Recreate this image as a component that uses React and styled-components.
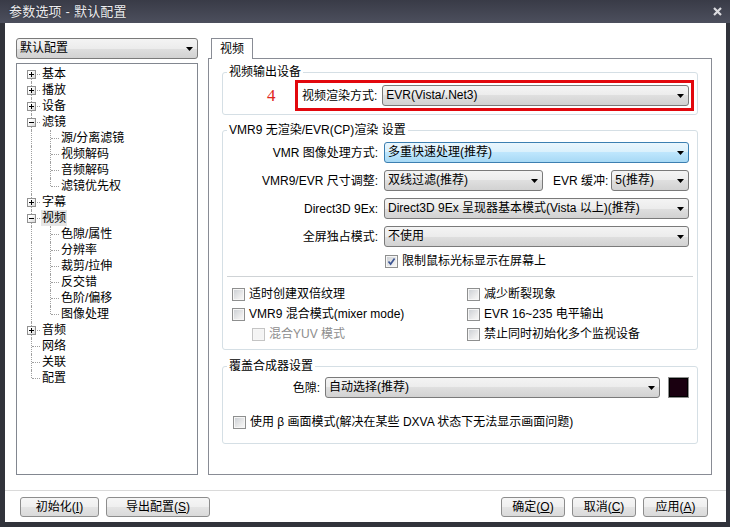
import React from 'react';
import styled, { createGlobalStyle } from 'styled-components';

const uiFont = `"Liberation Sans", "Noto Sans CJK SC", sans-serif`;

const GlobalStyle = createGlobalStyle`
  html, body {
    margin: 0;
    padding: 0;
    background: #2e3038;
  }

  body {
    font: 12px/14px ${uiFont};
    color: #000;
  }
`;

// Window chrome
const Window = styled.div`
  width: 730px;
  height: 527px;
  display: flex;
  flex-direction: column;
  background: #31333b;
`;

const TitleBar = styled.div`
  height: 23px;
  flex: none;
  display: flex;
  align-items: center;
  padding: 0 8px 0 9px;
  background: linear-gradient(#393b47, #4c4f5d);
  color: #ececef;
  font-size: 13px;
  text-shadow: 0 0 2px rgba(0, 0, 0, 0.5);
`;

const Title = styled.span`
  flex: 1;
  letter-spacing: 0.2px;
`;

const Client = styled.div`
  flex: 1;
  min-height: 0;
  margin: 0 4px 5px 5px;
  background: #fff;
  display: flex;
  flex-direction: column;
`;

const Main = styled.div`
  flex: 1;
  min-height: 0;
  display: flex;
  gap: 10px;
  padding: 15px 14px 15px 11px;
`;

const LeftPane = styled.div`
  width: 182px;
  flex: none;
  display: grid;
  grid-template-rows: 21px 1fr;
  gap: 4px;
`;

// Combo boxes
const ComboBox = styled.div`
  height: 21px;
  box-sizing: border-box;
  flex: ${({ $width }) => ($width ? 'none' : '1')};
  width: ${({ $width }) => ($width ? `${$width}px` : 'auto')};
  min-width: 0;
  display: flex;
  align-items: center;
  padding-left: 3px;
  border: 1px solid ${({ $focused }) => ($focused ? '#3c7fb1' : '#7a7a7a')};
  border-radius: 3px;
  background: ${({ $focused }) =>
    $focused
      ? 'linear-gradient(#eaf6fd 0%, #d9f0fc 50%, #bee6fd 50%, #a7d9f5 100%)'
      : 'linear-gradient(#f4f4f4 0%, #ececec 50%, #dfdfdf 50%, #d2d2d2 100%)'};
`;

const ComboText = styled.span`
  flex: 1;
  min-width: 0;
  white-space: nowrap;
  overflow: hidden;
  line-height: 19px;
`;

const ComboArrow = styled.span`
  width: 16px;
  flex: none;
  display: flex;
  align-items: center;
  justify-content: center;
`;

const Combo = ({ value, width, focused }) => (
  <ComboBox $width={width} $focused={focused}>
    <ComboText>{value}</ComboText>
    <ComboArrow>
      <svg width="7" height="4" viewBox="0 0 7 4">
        <polygon points="0,0 7,0 3.5,4" fill="#000" />
      </svg>
    </ComboArrow>
  </ComboBox>
);

// Tree view
const Tree = styled.div`
  border: 1px solid #828790;
  padding: 2px 0 0 5px;
`;

const TreeRow = styled.div`
  height: 16px;
  display: flex;
  align-items: center;
  line-height: 16px;
  white-space: nowrap;
`;

const Guide = styled.span`
  position: relative;
  width: 19px;
  height: 16px;
  flex: none;

  &::before {
    content: '';
    position: absolute;
    left: 9px;
    top: ${({ $type }) => ($type === 'first' ? '8px' : '0')};
    height: ${({ $type }) => ($type === 'first' || $type === 'last' ? '8px' : '16px')};
    border-left: 1px dotted #a0a0a0;
  }

  &::after {
    content: '';
    position: absolute;
    left: 10px;
    top: 8px;
    width: 8px;
    border-top: 1px dotted #a0a0a0;
    display: ${({ $type }) => ($type === 'pipe' ? 'none' : 'block')};
  }
`;

const Expander = styled.span`
  position: absolute;
  z-index: 1;
  left: 5px;
  top: 4px;
  width: 9px;
  height: 9px;
  box-sizing: border-box;
  border: 1px solid #919191;
  background: linear-gradient(135deg, #ffffff 30%, #d6d6d6);

  &::before {
    content: '';
    position: absolute;
    left: 1px;
    top: 3px;
    width: 5px;
    height: 1px;
    background: #000;
  }

  &::after {
    content: '';
    position: absolute;
    left: 3px;
    top: 1px;
    width: 1px;
    height: 5px;
    background: #000;
    display: ${({ $open }) => ($open ? 'none' : 'block')};
  }
`;

const TreeLabel = styled.span`
  padding: 0 1px;
  background: ${({ $selected }) => ($selected ? '#e6e6e6' : 'transparent')};
`;

const treeItems = [
  { label: '基本', toggle: 'plus' },
  { label: '播放', toggle: 'plus' },
  { label: '设备', toggle: 'plus' },
  { label: '滤镜', toggle: 'minus', children: ['源/分离滤镜', '视频解码', '音频解码', '滤镜优先权'] },
  { label: '字幕', toggle: 'plus' },
  {
    label: '视频',
    toggle: 'minus',
    selected: true,
    children: ['色隙/属性', '分辨率', '裁剪/拉伸', '反交错', '色阶/偏移', '图像处理'],
  },
  { label: '音频', toggle: 'plus' },
  { label: '网络' },
  { label: '关联' },
  { label: '配置' },
];

const SettingsTree = () => {
  const last = treeItems.length - 1;
  const rows = [];

  treeItems.forEach((item, i) => {
    const type = i === 0 ? 'first' : i === last ? 'last' : 'tee';
    rows.push(
      <TreeRow key={item.label}>
        <Guide $type={type}>{item.toggle && <Expander $open={item.toggle === 'minus'} />}</Guide>
        <TreeLabel $selected={item.selected}>{item.label}</TreeLabel>
      </TreeRow>
    );
    (item.children || []).forEach((child, j, list) => {
      rows.push(
        <TreeRow key={child}>
          <Guide $type="pipe" />
          <Guide $type={j === list.length - 1 ? 'last' : 'tee'} />
          <TreeLabel>{child}</TreeLabel>
        </TreeRow>
      );
    });
  });

  return <Tree>{rows}</Tree>;
};

// Tabs
const RightPane = styled.div`
  flex: 1;
  min-width: 0;
  display: flex;
  flex-direction: column;
`;

const TabStrip = styled.div`
  height: 20px;
  flex: none;
  display: flex;
  padding-left: 3px;
`;

const Tab = styled.div`
  position: relative;
  z-index: 1;
  width: 42px;
  height: 21px;
  box-sizing: border-box;
  border: 1px solid #898c95;
  border-bottom: none;
  background: #fff;
  text-align: center;
  line-height: 20px;
`;

const TabPage = styled.div`
  flex: 1;
  border: 1px solid #898c95;
  padding: 6px 13px 0;
  display: flex;
  flex-direction: column;
`;

// Group boxes: the fieldset keeps no side padding so every legend sits at
// the same offset; the body inside carries the horizontal inset.
const Group = styled.fieldset`
  margin: ${({ $top }) => $top || 0}px 0 0;
  padding: ${({ $pt }) => $pt}px 0 ${({ $pb }) => $pb}px;
  min-width: 0;
  border: 1px solid #d5dfe5;
  border-radius: 3px;
`;

const Legend = styled.legend`
  padding: 0 2px;
  margin-left: 4px;
  line-height: 14px;
`;

const GroupBody = styled.div`
  padding: 0 ${({ $right }) => $right}px 0 ${({ $left }) => $left}px;
`;

const OutputRow = styled.div`
  display: flex;
  align-items: center;
`;

const Marker = styled.span`
  width: 28px;
  flex: none;
  color: #e0241c;
  font: 17px/20px "Liberation Serif", serif;
`;

const HighlightFrame = styled.div`
  flex: 1;
  display: flex;
  align-items: center;
  gap: 5px;
  padding: 2px 2px 2px 4px;
  border: 3px solid #e2070d;
`;

const FormRow = styled.div`
  height: 21px;
  display: flex;
  align-items: center;
  margin-top: ${({ $gap }) => $gap || 0}px;
`;

const FieldLabel = styled.span`
  width: ${({ $width }) => $width}px;
  flex: none;
  margin-right: ${({ $right }) => ($right === undefined ? 6 : $right)}px;
  text-align: right;
  white-space: nowrap;
`;

const InlineLabel = styled.span`
  flex: none;
  margin: 0 3px 0 10px;
  white-space: nowrap;
`;

const Swatch = styled.span`
  width: 21px;
  height: 21px;
  flex: none;
  box-sizing: border-box;
  margin-left: 8px;
  border: 1px solid #8e8e8e;
  box-shadow: inset 0 0 0 1px #000;
  background: #1a0010;
`;

const Separator = styled.div`
  height: 1px;
  margin: 7px -4px 0;
  background: #cfd3d6;
`;

const CheckGrid = styled.div`
  display: grid;
  grid-template-columns: 235px 1fr;
  grid-auto-rows: 20px;
  margin-top: 7px;
`;

// Check boxes
const CheckItem = styled.label`
  display: flex;
  align-items: center;
  height: ${({ $height }) => $height || 20}px;
  margin-top: ${({ $gap }) => $gap || 0}px;
  padding-left: ${({ $indent }) => $indent || 1}px;
  color: ${({ $disabled }) => ($disabled ? '#8d8d8d' : '#000')};
  white-space: nowrap;
`;

const CheckBox = styled.span`
  width: 13px;
  height: 13px;
  flex: none;
  box-sizing: border-box;
  margin-right: 4px;
  display: inline-flex;
  align-items: center;
  justify-content: center;
  border: 1px solid ${({ $disabled }) => ($disabled ? '#c4c4c4' : '#8e8f8f')};
  box-shadow: inset 0 0 0 1px #f6f6f6;
  background: ${({ $disabled }) =>
    $disabled ? '#f4f4f4' : 'linear-gradient(135deg, #c9cdd2 0%, #eeeeee 70%, #f8f8f8 100%)'};
`;

const Check = ({ label, checked, disabled, indent, gap, height }) => (
  <CheckItem $disabled={disabled} $indent={indent} $gap={gap} $height={height}>
    <CheckBox $disabled={disabled}>
      {checked && (
        <svg width="9" height="9" viewBox="0 0 9 9">
          <path d="M1.5 4.5 L3.6 7 L7.6 1.5" fill="none" stroke="#3d5694" strokeWidth="1.7" />
        </svg>
      )}
    </CheckBox>
    {label}
  </CheckItem>
);

// Footer buttons
const Footer = styled.div`
  flex: none;
  display: flex;
  gap: 7px;
  padding: 6px 18px 5px 15px;
  border-top: 1px solid #dadada;
`;

const Spacer = styled.span`
  flex: 1;
`;

const Button = styled.button`
  width: ${({ $width }) => $width}px;
  height: 20px;
  padding: 0;
  box-sizing: border-box;
  border: 1px solid #8d8d8d;
  border-radius: 3px;
  background: linear-gradient(#f6f6f6 0%, #efefef 50%, #e4e4e4 50%, #dadada 100%);
  font: 12px/18px ${uiFont};
  color: #000;

  u {
    text-decoration: underline;
    text-underline-offset: 1px;
  }
`;

export default function App() {
  return (
    <>
      <GlobalStyle />
      <Window>
        <TitleBar>
          <Title>参数选项 - 默认配置</Title>
          <svg width="9" height="9" viewBox="0 0 9 9">
            <path d="M1 1 L8 8 M8 1 L1 8" stroke="#dcdce0" strokeWidth="2.2" />
          </svg>
        </TitleBar>
        <Client>
          <Main>
            <LeftPane>
              <Combo value="默认配置" />
              <SettingsTree />
            </LeftPane>
            <RightPane>
              <TabStrip>
                <Tab>视频</Tab>
              </TabStrip>
              <TabPage>
                <Group $pt={1} $pb={3}>
                  <Legend>视频输出设备</Legend>
                  <GroupBody $left={44} $right={3}>
                    <OutputRow>
                      <Marker>4</Marker>
                      <HighlightFrame>
                        <span>视频渲染方式:</span>
                        <Combo value="EVR(Vista/.Net3)" />
                      </HighlightFrame>
                    </OutputRow>
                  </GroupBody>
                </Group>

                <Group $top={8} $pt={5} $pb={5}>
                  <Legend>VMR9 无渲染/EVR(CP)渲染 设置</Legend>
                  <GroupBody $left={8} $right={8}>
                    <FormRow>
                      <FieldLabel $width={147}>VMR 图像处理方式:</FieldLabel>
                      <Combo value="多重快速处理(推荐)" focused />
                    </FormRow>
                    <FormRow $gap={7}>
                      <FieldLabel $width={147}>VMR9/EVR 尺寸调整:</FieldLabel>
                      <Combo value="双线过滤(推荐)" width={159} />
                      <InlineLabel>EVR 缓冲:</InlineLabel>
                      <Combo value="5(推荐)" />
                    </FormRow>
                    <FormRow $gap={7}>
                      <FieldLabel $width={147}>Direct3D 9Ex:</FieldLabel>
                      <Combo value="Direct3D 9Ex 呈现器基本模式(Vista 以上)(推荐)" />
                    </FormRow>
                    <FormRow $gap={7}>
                      <FieldLabel $width={147}>全屏独占模式:</FieldLabel>
                      <Combo value="不使用" />
                    </FormRow>
                    <Check label="限制鼠标光标显示在屏幕上" checked indent={154} gap={6} height={16} />
                    <Separator />
                    <CheckGrid>
                      <Check label="适时创建双倍纹理" />
                      <Check label="减少断裂现象" />
                      <Check label="VMR9 混合模式(mixer mode)" />
                      <Check label="EVR 16~235 电平输出" />
                      <Check label="混合YUV 模式" disabled indent={21} />
                      <Check label="禁止同时初始化多个监视设备" />
                    </CheckGrid>
                  </GroupBody>
                </Group>

                <Group $top={9} $pt={4} $pb={13}>
                  <Legend>覆盖合成器设置</Legend>
                  <GroupBody $left={8} $right={8}>
                    <FormRow>
                      <FieldLabel $width={89} $right={5}>色隙:</FieldLabel>
                      <Combo value="自动选择(推荐)" />
                      <Swatch />
                    </FormRow>
                    <Check
                      label="使用 β 画面模式(解决在某些 DXVA 状态下无法显示画面问题)"
                      indent={2}
                      gap={16}
                      height={16}
                    />
                  </GroupBody>
                </Group>
              </TabPage>
            </RightPane>
          </Main>
          <Footer>
            <Button $width={79}>初始化(<u>I</u>)</Button>
            <Button $width={104}>导出配置(<u>S</u>)</Button>
            <Spacer />
            <Button $width={64}>确定(<u>O</u>)</Button>
            <Button $width={64}>取消(<u>C</u>)</Button>
            <Button $width={65}>应用(<u>A</u>)</Button>
          </Footer>
        </Client>
      </Window>
    </>
  );
}
